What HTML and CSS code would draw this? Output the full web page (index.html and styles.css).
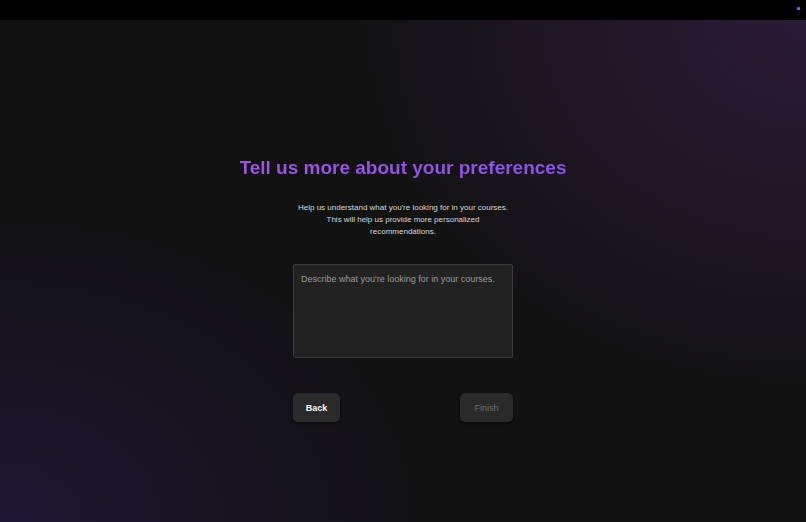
FILE: index.html
```html
<!DOCTYPE html>
<html lang="en">
<head>
<meta charset="utf-8">
<title>Preferences</title>
<link rel="stylesheet" href="styles.css">
</head>
<body>
<div class="topbar"><span class="dot"></span></div>
<main class="main">
  <section class="panel">
    <h1 class="title">Tell us more about your preferences</h1>
    <p class="subtitle">Help us understand what you're looking for in your courses. This will help us provide more personalized recommendations.</p>
    <textarea class="field" placeholder="Describe what you're looking for in your courses."></textarea>
    <div class="actions">
      <button class="btn btn-back">Back</button>
      <button class="btn btn-finish" disabled>Finish</button>
    </div>
  </section>
</main>
</body>
</html>
```
FILE: styles.css
```css
* { box-sizing: border-box; }
html, body { margin: 0; padding: 0; height: 100%; }
body {
  background: #121212;
  font-family: "Liberation Sans", Arial, sans-serif;
  color: #ddd;
  overflow: hidden;
}
.topbar {
  height: 20px;
  background: #000;
  display: flex;
  justify-content: flex-end;
  align-items: flex-start;
  padding: 7px 6px 0 0;
}
.dot {
  width: 3px;
  height: 3px;
  border-radius: 50%;
  background: #7a6cff;
  box-shadow: 0 0 2px #5a4ae0;
}
.main {
  height: 502px;
  background:
    radial-gradient(ellipse 460px 380px at 100% 0%, rgba(75, 40, 105, 0.42), rgba(60, 30, 90, 0) 100%),
    radial-gradient(ellipse 440px 320px at 0% 100%, rgba(40, 25, 80, 0.5), rgba(40, 25, 80, 0) 100%),
    #121212;
  display: flex;
  justify-content: center;
}
.panel {
  width: 330px;
  display: flex;
  flex-direction: column;
  align-items: center;
  padding-top: 136px;
}
.title {
  margin: 0;
  font-size: 19px;
  line-height: 24px;
  font-weight: 700;
  white-space: nowrap;
  color: #9a50e6;
  background: linear-gradient(90deg, #a052e4, #8b52ea);
  -webkit-background-clip: text;
  background-clip: text;
  -webkit-text-fill-color: transparent;
}
.subtitle {
  margin: 22px 0 0;
  width: 216px;
  font-size: 8px;
  line-height: 12px;
  text-align: center;
  color: #d8d8d8;
}
.field {
  margin-top: 26px;
  width: 220px;
  height: 94px;
  background: #222;
  border: 1px solid #3a3a3a;
  border-radius: 2px;
  padding: 9px 7px;
  font-family: "Liberation Sans", Arial, sans-serif;
  font-size: 9px;
  color: #ddd;
  resize: none;
  outline: none;
}
.field::placeholder { color: #9a9a9a; }
.actions {
  margin-top: 35px;
  width: 220px;
  display: flex;
  justify-content: space-between;
}
.btn {
  height: 29px;
  border: none;
  border-radius: 5px;
  background: #2a2a2a;
  font-family: "Liberation Sans", Arial, sans-serif;
  font-size: 9px;
  padding: 0 12px;
  box-shadow: 0 1px 3px rgba(0,0,0,0.5);
}
.btn-back { color: #fff; font-weight: 700; width: 47px; }
.btn-finish { color: #6a6a6a; width: 53px; }
```
